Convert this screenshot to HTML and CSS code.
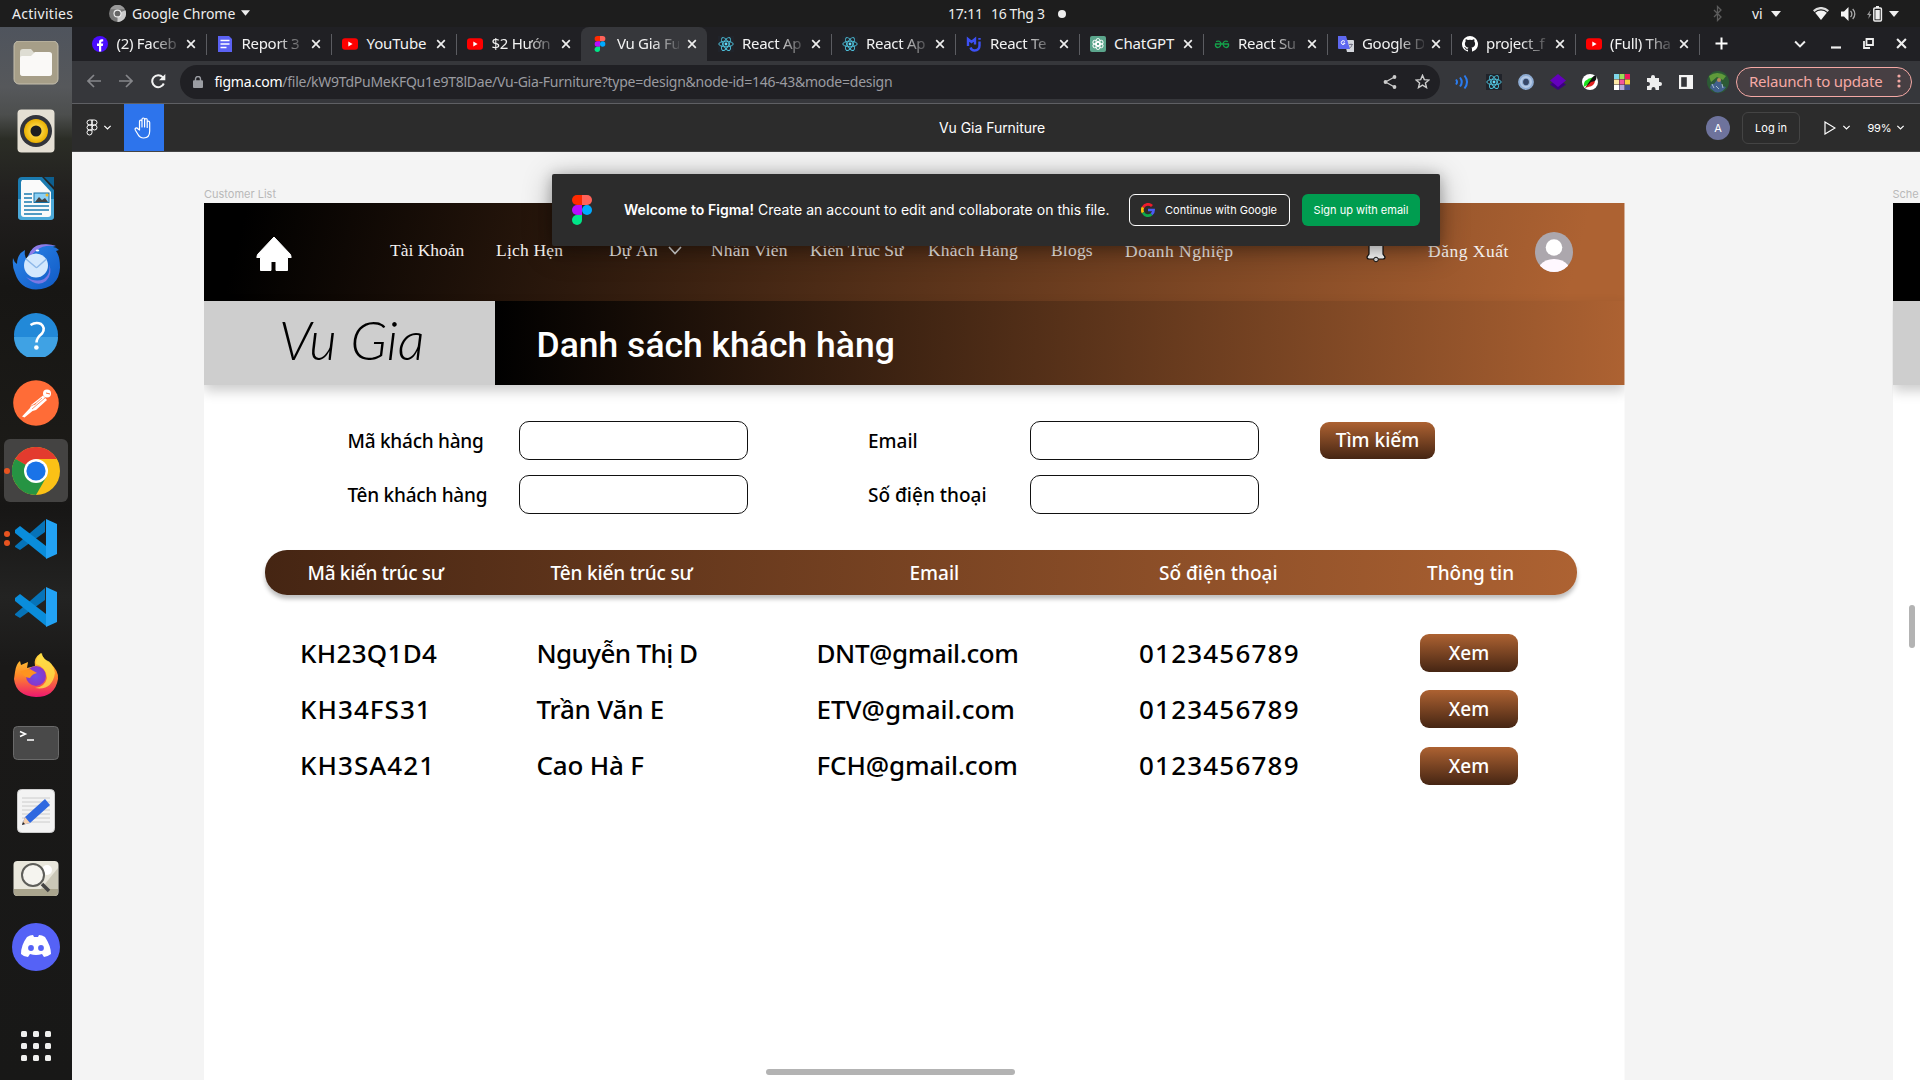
FILE: index.html
```html
<!DOCTYPE html>
<html lang="vi">
<head>
<meta charset="utf-8">
<title>Vu Gia Furniture</title>
<link rel="stylesheet" href="styles.css">
</head>
<body>
<svg class="defs" width="0" height="0">
  <defs>
    <symbol id="i-close" viewBox="0 0 10 10"><path d="M1.2 1.2l7.6 7.6M8.8 1.2L1.2 8.8" stroke="#eee" stroke-width="1.7"/></symbol>
    <symbol id="i-chev" viewBox="0 0 10 10"><path d="M1.5 3.2L5 6.7l3.5-3.5" fill="none" stroke="currentColor" stroke-width="1.3"/></symbol>
    <symbol id="i-tri" viewBox="0 0 10 6"><path d="M0 0h10L5 6z" fill="#eee"/></symbol>
    <symbol id="i-figma" viewBox="0 0 20 30">
      <path d="M5 0h5v10H5A5 5 0 0 1 5 0z" fill="#ff2a00"/><path d="M10 0h5a5 5 0 0 1 0 10h-5z" fill="#ff6259"/>
      <path d="M5 10h5v10H5a5 5 0 0 1 0-10z" fill="#b80cff"/><circle cx="15" cy="15" r="5" fill="#00aaff"/>
      <path d="M5 20h5v5a5 5 0 1 1-5-5z" fill="#00e588"/>
    </symbol>
    <symbol id="i-yt" viewBox="0 0 16 16"><rect y="2.2" width="16" height="11.6" rx="3" fill="#f00"/><path d="M6.3 5.5v5l4.3-2.5z" fill="#fff"/></symbol>
    <symbol id="i-react" viewBox="0 0 16 16"><rect width="16" height="16" fill="#20232a"/><g fill="none" stroke="#4fc6e0" stroke-width=".9"><ellipse cx="8" cy="8" rx="7.2" ry="2.8"/><ellipse cx="8" cy="8" rx="7.2" ry="2.8" transform="rotate(60 8 8)"/><ellipse cx="8" cy="8" rx="7.2" ry="2.8" transform="rotate(120 8 8)"/></g><circle cx="8" cy="8" r="1.4" fill="#61dafb"/></symbol>
    <symbol id="i-vscode" viewBox="0 0 44 40">
      <path d="M1 27L31 1v12L6 31l-5-3z" fill="#0673b8"/>
      <path d="M1 11l5-4 26 20v12L1 14z" fill="#0a8ddb"/>
      <path d="M32 0l11 5v30l-11 5z" fill="#22a2f4"/>
    </symbol>
    <linearGradient id="g-ff" x1="0" y1="0" x2="0" y2="1"><stop offset="0" stop-color="#ffd83a"/><stop offset=".5" stop-color="#ff8a28"/><stop offset="1" stop-color="#ee1670"/></linearGradient>
    <radialGradient id="g-ffc"><stop offset="0" stop-color="#6b50e8"/><stop offset="1" stop-color="#8a35c8"/></radialGradient>
    <linearGradient id="g-tb" x1="0" y1="0" x2="1" y2="1"><stop offset="0" stop-color="#2c86ea"/><stop offset="1" stop-color="#1059c4"/></linearGradient>
    <radialGradient id="g-spk"><stop offset=".3" stop-color="#ffdc50"/><stop offset="1" stop-color="#eab000"/></radialGradient>
  </defs>
</svg>

<div class="topbar">
  <span class="t-act">Activities</span>
  <span class="t-app"><svg width="17" height="17" viewBox="0 0 16 16"><circle cx="8" cy="8" r="8" fill="#777"/><path d="M8 8l7.5-3A8 8 0 0 1 8 16z" fill="#ccc"/><path d="M1 4a8 8 0 0 1 14 0z" fill="#999"/><circle cx="8" cy="8" r="3.8" fill="#eee"/><circle cx="8" cy="8" r="2.7" fill="#666"/></svg><b>Google Chrome</b><svg width="9" height="6"><use href="#i-tri"/></svg></span>
  <span class="t-time">17:11</span><span class="t-date">16 Thg 3</span><i class="dot"></i>
  <span class="t-right">
    <svg width="10" height="17" viewBox="0 0 10 17"><path d="M1 5l7 7-3.5 3.5v-14L8 5l-7 7" fill="none" stroke="#5c5c5c" stroke-width="1.3"/></svg>
    <span>vi</span>
    <svg width="10" height="6"><use href="#i-tri"/></svg>
    <svg width="16" height="13" viewBox="0 0 16 13"><path d="M0 3.2a11.5 11.5 0 0 1 16 0L14.6 5a9.6 9.6 0 0 0-13.2 0z" fill="#ddd"/><path d="M2.2 5.7a8.6 8.6 0 0 1 11.6 0L8 13z" fill="#f4f4f4"/></svg>
    <svg width="16" height="14" viewBox="0 0 16 14"><path d="M0 4.5h3L7.5 0v14L3 9.5H0z" fill="#f4f4f4"/><path d="M9.5 4a4 4 0 0 1 0 6M11.7 2a7 7 0 0 1 0 10" fill="none" stroke="#aaa" stroke-width="1.3"/></svg>
    <svg width="16" height="16" viewBox="0 0 16 16"><path d="M3.5 4L0 9h2l-.7 4L4.5 8h-2z" fill="#999"/><path d="M9 0h3v2H9z" fill="#eee"/><rect x="6.8" y="2" width="7.6" height="13" rx="1" fill="none" stroke="#eee" stroke-width="1.5"/><rect x="8.4" y="4" width="4.4" height="9.4" fill="#eee"/></svg>
    <svg width="10" height="6"><use href="#i-tri"/></svg>
  </span>
</div>

<div class="desk">
  <div class="dock">
    <div class="app"><svg width="46" height="44" viewBox="0 0 46 44"><rect x="1" y="0" width="44" height="43" rx="5" fill="#a69e88" stroke="#c5bfae"/><path d="M7 11q0-3 3-3h8l3 3.500h15q3 0 3 3V32q0 3-3 3H10q-3 0-3-3z" fill="#deddd3"/><path d="M7 17q0-2 2-2h9l4-4h14q3 0 3 3v18q0 3-3 3H10q-3 0-3-3z" fill="#faf9f7"/></svg></div>
    <div class="app"><svg width="38" height="44" viewBox="0 0 38 44"><rect x=".5" y=".5" width="37" height="43" rx="4" fill="#e4dfd3"/><circle cx="19" cy="22" r="16" fill="#32343b"/><circle cx="19" cy="22" r="12" fill="url(#g-spk)"/><circle cx="19" cy="22" r="5.5" fill="#1d1e20"/></svg></div>
    <div class="app"><svg width="38" height="44" viewBox="0 0 38 44"><path d="M5 0h20l12 13v26q0 4-4 4H5q-4 0-4-4V4q0-4 4-4z" fill="#1b7bb0"/><path d="M1 22h36v18q0 3-4 3H5q-4 0-4-3z" fill="#4ba8d8"/><path d="M5 3h18l11 12v22q0 3-3 3H7q-3 0-3-3V5z" fill="#fafafa"/><path d="M27 0h10v10z" fill="#0d5f8f"/><path d="M7 17h8M7 21h8M7 25h8M7 29h25M7 33h25M7 37h18" stroke="#1b7bb0" stroke-width="1.7"/><rect x="17" y="16" width="15" height="9.5" fill="#8bd0f5" stroke="#1670a4"/><path d="M18 25l4-5 3 3 3-2 3 4z" fill="#444"/><circle cx="30" cy="18" r="1.5" fill="#f5b921"/></svg></div>
    <div class="app"><svg width="48" height="46" viewBox="0 0 48 46"><path d="M1 14q-1 9 2 15Q8 45 24 45.500q23-1 24-22Q48 12 44 7l3-1q-3-3-6-3l3-1Q36-.500 28 1q-8 2-11 9-2 3-2 6-3-4-2-10-8 4-8 14-3-2-4-6z" fill="url(#g-tb)"/><path d="M17 12Q19 2 29 .500q9-1 15 1.500-13-1.500-19 4-4 4-8 6z" fill="#8d7ae6"/><path d="M14 33q10 6 18 2 7-5 5-15 4 10-3 17-9 7-20-4z" fill="#7a78e4"/><circle cx="24" cy="21.500" r="12" fill="#d3e8fd"/><path d="M14 15l9.500 8q1 .8 2 0l9-8" fill="none" stroke="#8db8e8" stroke-width="1.500"/><ellipse cx="25.500" cy="6.500" rx="1.800" ry="1" fill="#fff"/></svg></div>
    <div class="app"><svg width="46" height="44" viewBox="0 0 46 44"><circle cx="23" cy="22" r="22" fill="#2289d8"/><path d="M1 24h44a22 22 0 0 1-44 0z" fill="#3fa2e4"/><path d="M17.500 12q5.500-3.500 10.500-1 5 4 1 9.500-5.500 4.500-5.500 9" fill="none" stroke="#fff" stroke-width="2.6"/><circle cx="23.4" cy="34.5" r="2.3" fill="#fff"/></svg></div>
    <div class="app"><svg width="46" height="46" viewBox="0 0 46 46"><circle cx="23" cy="23" r="22.8" fill="#ff6c37"/><path d="M9 36.500l8-8.500 1-3 12-9.500 4 4.500-11 10-3.500 1-8 6.500z" fill="#fff"/><path d="M17 26.500l6-3M19 29l13-11M21 25l8-7" stroke="#ff6c37" stroke-width=".7"/><circle cx="34" cy="13.500" r="4" fill="#fff"/><path d="M33 13l4 1" stroke="#ff6c37"/></svg></div>
    <div class="app current"><i class="run one"></i><svg width="48" height="48" viewBox="0 0 48 48"><circle cx="24" cy="24" r="24" fill="#fbc116"/><path d="M24 24L3.200 12A24 24 0 0 1 44.800 12z" fill="#e33b2e"/><path d="M3.200 12A24 24 0 0 0 24 48l10.400-18z" fill="#269443"/><path d="M24 12h20.800q1.500 3 2.500 6L34 30z" fill="#fbc116"/><path d="M3.200 12L13.600 30 24 24z" fill="#269443"/><circle cx="24" cy="24" r="12" fill="#fff"/><circle cx="24" cy="24" r="9.6" fill="#1a73e8"/></svg></div>
    <div class="app"><i class="run two"></i><svg width="44" height="40"><use href="#i-vscode"/></svg></div>
    <div class="app"><svg width="44" height="40"><use href="#i-vscode"/></svg></div>
    <div class="app"><svg width="46" height="46" viewBox="0 0 46 46"><path d="M2 20Q3 12 7 9l1 4 7-3-1 6 8-2q-2-8 6-13 2 6 9 10 9 8 8 16-3 18-22 18Q3 44 1 27z" fill="url(#g-ff)"/><path d="M29 1q-6 4-6 11 10 3 11 14-2 9-12 10 17 3 20-15Q40 10 33 8q-4-3-4-7z" fill="#ffe148" opacity=".8"/><circle cx="23" cy="24" r="10" fill="url(#g-ffc)"/><path d="M7 19l10-2 7 4q-5 1-7 5-6 0-10-7z" fill="#ff9320"/></svg></div>
    <div class="app"><svg width="46" height="34" viewBox="0 0 46 34"><rect x=".5" y=".5" width="45" height="33" rx="4" fill="#494949" stroke="#6a6a6a"/><path d="M7 5.500l5.500 2.500L7 10.500M14 14h7" fill="none" stroke="#fff" stroke-width="1.5"/></svg></div>
    <div class="app"><svg width="38" height="44" viewBox="0 0 38 44"><rect x=".5" y=".5" width="37" height="43" rx="4" fill="#f3f3f3" stroke="#ccc"/><path d="M5 9h28M5 13h28M5 17h28M5 21h28M5 25h28M5 29h28M5 33h28" stroke="#ccc"/><path d="M5 36l3-8 20-18 5 6-20 18z" fill="#2f68e0"/><path d="M5 36l3-8 5 6z" fill="#f6d0ae"/><path d="M5 36l1-3 2 2z" fill="#222"/></svg></div>
    <div class="app"><svg width="46" height="38" viewBox="0 0 46 38"><rect x=".5" y="1" width="45" height="35" rx="4" fill="#e9e7dc"/><path d="M45 8v22H27z" fill="#cbc8b8"/><path d="M1 29h44v4q0 3-4 3H5q-4 0-4-3z" fill="#aaa58e"/><circle cx="34" cy="10" r="5" fill="#fff"/><circle cx="20" cy="15" r="11" fill="#f5f4ef" stroke="#5e5e5a" stroke-width="2"/><path d="M29 24l7 7" stroke="#444" stroke-width="3.5"/></svg></div>
    <div class="app"><svg width="48" height="48" viewBox="0 0 48 48"><circle cx="24" cy="24" r="24" fill="#5562f6"/><path d="M15 14q3-2 6-2l1 2h4l1-2q3 0 6 2 6 9 6 17-4 3-7 3l-2-3q-6 2-12 0l-2 3q-4 0-7-3 0-9 6-17z" fill="#fff"/><circle cx="19" cy="25" r="2.9" fill="#5562f6"/><circle cx="29" cy="25" r="2.9" fill="#5562f6"/></svg></div>
    <div class="app launcher"><svg width="30" height="30" viewBox="0 0 30 30"><g fill="#f0f0ee"><rect width="6" height="6" rx="1.5"/><rect x="12" width="6" height="6" rx="1.5"/><rect x="24" width="6" height="6" rx="1.5"/><rect y="12" width="6" height="6" rx="1.5"/><rect x="12" y="12" width="6" height="6" rx="1.5"/><rect x="24" y="12" width="6" height="6" rx="1.5"/><rect y="24" width="6" height="6" rx="1.5"/><rect x="12" y="24" width="6" height="6" rx="1.5"/><rect x="24" y="24" width="6" height="6" rx="1.5"/></g></svg></div>
  </div>

  <div class="browser">
    <div class="tabs">
      <div class="tab wide"><svg class="fav" viewBox="0 0 16 16"><circle cx="8" cy="8" r="8" fill="#4a0cff"/><path d="M7 15.500V10H5V7.600h2V6q0-2.800 2.700-2.800h1.500v2.200h-1q-1 0-1 1v1.200h2L10.800 10H9.200v5.500z" fill="#fff"/></svg><span>(2) Faceb</span><svg class="x"><use href="#i-close"/></svg></div>
      <div class="tab wide"><svg class="fav" viewBox="0 0 16 16"><path d="M1 0h11l3 3v13H1z" fill="#5b62f4"/><path d="M3.500 4.500h9M3.500 8h9M3.500 11.500h6" stroke="#fff" stroke-width="1.5"/></svg><span>Report 3</span><svg class="x"><use href="#i-close"/></svg></div>
      <div class="tab wide"><svg class="fav"><use href="#i-yt"/></svg><span class="full">YouTube</span><svg class="x"><use href="#i-close"/></svg></div>
      <div class="tab wide nosep"><svg class="fav"><use href="#i-yt"/></svg><span>$2 Hướn</span><svg class="x"><use href="#i-close"/></svg></div>
      <div class="tab active"><svg class="fav"><use href="#i-figma"/></svg><span>Vu Gia Fu</span><svg class="x"><use href="#i-close"/></svg></div>
      <div class="tab"><svg class="fav"><use href="#i-react"/></svg><span>React Ap</span><svg class="x"><use href="#i-close"/></svg></div>
      <div class="tab"><svg class="fav"><use href="#i-react"/></svg><span>React Ap</span><svg class="x"><use href="#i-close"/></svg></div>
      <div class="tab"><svg class="fav" viewBox="0 0 16 16"><path d="M2 10V3l3.500 3L9 3v5.500M13.500 2v1.700M13.500 5.500v4q0 5-5 5-3 0-4-3" fill="none" stroke="#3c50f5" stroke-width="2.4"/></svg><span>React Te</span><svg class="x"><use href="#i-close"/></svg></div>
      <div class="tab"><svg class="fav" viewBox="0 0 16 16"><rect width="16" height="16" rx="2" fill="#5ba58c"/><g fill="none" stroke="#fff" stroke-width=".9"><rect x="6" y="2.5" width="4" height="7.5" rx="2"/><rect x="6" y="2.5" width="4" height="7.5" rx="2" transform="rotate(60 8 8)"/><rect x="6" y="2.5" width="4" height="7.5" rx="2" transform="rotate(120 8 8)"/><rect x="6" y="2.5" width="4" height="7.5" rx="2" transform="rotate(180 8 8)"/><rect x="6" y="2.5" width="4" height="7.5" rx="2" transform="rotate(240 8 8)"/><rect x="6" y="2.5" width="4" height="7.5" rx="2" transform="rotate(300 8 8)"/></g></svg><span class="full">ChatGPT</span><svg class="x"><use href="#i-close"/></svg></div>
      <div class="tab"><svg class="fav" viewBox="0 0 16 16"><path d="M1 8h14M2 5.500q4-1.500 5 2-.5 4-3.500 4-2.500-.5-2-3.500M14 5.500q-4-1.500-5 2 .5 4 3.500 4 2.500-.5 2-3.500" fill="none" stroke="#15a04a" stroke-width="1.3"/></svg><span>React Su</span><svg class="x"><use href="#i-close"/></svg></div>
      <div class="tab"><svg class="fav" viewBox="0 0 16 16"><path d="M6 4h9q1 0 1 1v11H9z" fill="#d4d6dc"/><path d="M0 0h8l4 13H1q-1 0-1-1z" fill="#5e68f0"/><path d="M7 5.500Q5.500 4 4 5q-1.500 1.500 0 3.200 2 1.200 3-1H5" fill="none" stroke="#fff"/><path d="M11 8.500h4M13 7.500v1M11.500 12q2.500-1 2.500-3.500" fill="none" stroke="#667" stroke-width=".8"/></svg><span>Google D</span><svg class="x"><use href="#i-close"/></svg></div>
      <div class="tab"><svg class="fav" viewBox="0 0 16 16"><path d="M8 0a8 8 0 0 0-2.500 15.600c.4 0 .5-.2.500-.4v-1.500c-2.200.5-2.700-1-2.700-1-.4-.9-.9-1.100-.9-1.100-.7-.5.100-.5.100-.5.800 0 1.200.8 1.200.8.700 1.300 1.900.9 2.300.7.100-.5.300-.9.500-1.100-1.800-.2-3.600-.9-3.600-4 0-.9.300-1.600.8-2.100 0-.2-.400-1 .100-2.100 0 0 .7-.2 2.200.8a7.500 7.500 0 0 1 4 0c1.500-1 2.200-.8 2.200-.8.400 1.100.2 1.900.1 2.100.5.500.8 1.200.8 2.100 0 3.100-1.900 3.800-3.700 4 .3.200.6.700.6 1.500v2.200c0 .2.100.5.500.4A8 8 0 0 0 8 0z" fill="#fff"/></svg><span>project_f</span><svg class="x"><use href="#i-close"/></svg></div>
      <div class="tab"><svg class="fav"><use href="#i-yt"/></svg><span>(Full) Tha</span><svg class="x"><use href="#i-close"/></svg></div>
      <div class="winbtns">
        <svg width="13" height="13" viewBox="0 0 13 13"><path d="M6.500 .5v12M.5 6.500h12" stroke="#fff" stroke-width="2"/></svg>
        <svg width="14" height="14" viewBox="0 0 10 10"><path d="M1.500 3.200L5 6.700l3.500-3.500" fill="none" stroke="#eee" stroke-width="1.4"/></svg>
        <svg width="10" height="12" viewBox="0 0 10 12"><path d="M0 9.500h10" stroke="#eee" stroke-width="2.2"/></svg>
        <svg width="11" height="11" viewBox="0 0 11 11"><path d="M3.500 1h6.500v6H3.500zM1 3v7h6" fill="none" stroke="#eee" stroke-width="1.8"/></svg>
        <svg width="11" height="11" viewBox="0 0 10 10"><path d="M1 1l8 8M9 1L1 9" stroke="#eee" stroke-width="1.9"/></svg>
      </div>
    </div>

    <div class="toolbar">
      <div class="navbtns">
        <svg width="14" height="14" viewBox="0 0 14 14"><path d="M14 7H1.500M7 1L1 7l6 6" fill="none" stroke="#85868a" stroke-width="1.7"/></svg>
        <svg width="14" height="14" viewBox="0 0 14 14"><path d="M0 7h12.500M7 1l6 6-6 6" fill="none" stroke="#85868a" stroke-width="1.7"/></svg>
        <svg width="15" height="15" viewBox="0 0 15 15"><path d="M12.800 9.500A6 6 0 1 1 11.700 3.200l1.500 1.500" fill="none" stroke="#f2f2f2" stroke-width="2"/><path d="M14.300 0v6.300H8z" fill="#f2f2f2"/></svg>
      </div>
      <div class="omni">
        <svg width="10" height="12" viewBox="0 0 10 12"><rect y="4.3" width="10" height="7.7" rx="1" fill="#9b9da3"/><path d="M2.500 5V3a2.500 2.500 0 0 1 5 0v2" fill="none" stroke="#9b9da3" stroke-width="1.4"/></svg>
        <span class="url"><b>figma.com</b>/file/kW9TdPuMeKFQu1e9T8lDae/Vu-Gia-Furniture?type=design&amp;node-id=146-43&amp;mode=design</span>
        <svg width="14" height="14" viewBox="0 0 14 14"><path d="M11.500 2L2.500 7l9 5" fill="none" stroke="#ccc" stroke-width="1.3"/><g fill="#ccc"><circle cx="11.5" cy="2" r="1.9"/><circle cx="2.5" cy="7" r="1.9"/><circle cx="11.5" cy="12" r="1.9"/></g></svg>
        <svg width="15" height="15" viewBox="0 0 15 15"><path d="M7.500 1.300l1.800 4.300 4.700.4-3.600 3 1.100 4.600-4-2.500-4 2.500 1.100-4.600L1 6l4.700-.4z" fill="none" stroke="#ccc" stroke-width="1.4"/></svg>
      </div>
      <div class="exts">
        <svg viewBox="0 0 16 16"><path d="M2 5.500q2 2.500 0 5M6 3.500q3.500 4.500 0 9M10.500 1.500q5 6.500 0 13" fill="none" stroke="#2b7cf0" stroke-width="2"/></svg>
        <svg><use href="#i-react"/></svg>
        <svg viewBox="0 0 16 16"><circle cx="8" cy="8" r="5.3" fill="none" stroke="#8fadd4" stroke-width="5.2"/><circle cx="8" cy="8" r="5" fill="none" stroke="#b6cae6" stroke-width="2"/><ellipse cx="8" cy="8" rx="2.5" ry="3.2" fill="#35476a"/></svg>
        <svg viewBox="0 0 16 16"><path d="M0 10.500L8 5l8 5.500L8 16z" fill="#3b007f"/><path d="M0 6.500L8 0l8 6.500L8 13z" fill="#6400bd"/></svg>
        <svg viewBox="0 0 16 16"><circle cx="8" cy="8" r="8" fill="#fff"/><path d="M1.500 13Q1 5 12 3l-3 6z" fill="#1be01b"/><path d="M3 14l7-9 3 1q0 6-7 7z" fill="#e02020"/><path d="M3 14L10 4q2-3 4-2 1 3-1 5l-4 1z" fill="#111"/></svg>
        <svg viewBox="0 0 16 16"><path d="M0 0h5v5H0z" fill="#7fd6ea"/><path d="M5.500 0h5v5h-5z" fill="#9ae05a"/><path d="M11 0h5v5h-5z" fill="#f0185c"/><path d="M0 5.500h5v5H0z" fill="#ffe9a8"/><path d="M5.500 5.500h5v5h-5z" fill="#f5559a"/><path d="M11 5.500h5v5h-5z" fill="#f7cf3c"/><path d="M0 11h5v5H0z" fill="#fff"/><path d="M5.500 11h5v5h-5z" fill="#b6a8dc"/><path d="M11 11h5v5h-5z" fill="#44508c"/></svg>
        <svg viewBox="0 0 16 16"><path d="M1 4h4V3a2 2 0 0 1 4 0v1h4v4h1a2 2 0 0 1 0 4h-1v4H9.500v-1a2 2 0 0 0-4 0v1H1v-4h1a2 2 0 0 0 0-4H1z" fill="#eee"/></svg>
        <svg viewBox="0 0 16 16"><path d="M1 1h14v14H1z" fill="#f4f4f4"/><path d="M3.200 3.200h5.600v9.600H3.200z" fill="#35363a"/></svg>
        <svg class="me" viewBox="0 0 22 22"><circle cx="11" cy="11" r="11" fill="#2c5a35"/><path d="M2 5q8-6 17 0l-3 4-6-3-6 5z" fill="#5f9a3a"/><path d="M3 17q1-5 4-4l3-4 4 1 1 5 4 1q-4 7-11 5z" fill="#41608c"/><circle cx="12" cy="9" r="2" fill="#b9875f"/><path d="M5 13l2 4M15 13l1 4M9 15l3 3" stroke="#a8c0cc"/></svg>
      </div>
      <div class="relaunch"><span>Relaunch to update</span><svg width="4" height="14" viewBox="0 0 4 14"><g fill="#f5a9a5"><circle cx="2" cy="2" r="1.6"/><circle cx="2" cy="7" r="1.6"/><circle cx="2" cy="12" r="1.6"/></g></svg></div>
    </div>

    <div class="figbar">
      <div class="menu"><svg width="12" height="17" viewBox="0 0 12 17"><path d="M6 1H3.500a2.500 2.500 0 0 0 0 5H6zM6 1h2.500a2.500 2.500 0 0 1 0 5H6zM6 6H3.500a2.500 2.500 0 0 0 0 5H6zM6 11H3.500A2.500 2.500 0 1 0 6 13.500z" fill="none" stroke="#fff" stroke-width="1"/><circle cx="8.5" cy="8.5" r="2.5" fill="none" stroke="#fff"/></svg><svg width="9" height="9"><use href="#i-chev"/></svg></div>
      <div class="hand"><svg width="20" height="22" viewBox="0 0 20 22"><path d="M5.500 13V4.500q0-1.400 1.200-1.400t1.300 1.400V10 2.500q0-1.500 1.300-1.500t1.300 1.500V10 3q0-1.400 1.300-1.400T13.200 3v7.500V5.500q0-1.300 1.200-1.300t1.300 1.300V14q0 7-6 7-4 0-6-4l-2.300-3.800q-.8-1.500.4-2.100t2 .6z" fill="none" stroke="#fff" stroke-width="1.2" stroke-linejoin="round"/></svg></div>
      <div class="filename">Vu Gia Furniture</div>
      <div class="who">A</div>
      <div class="login">Log in</div>
      <div class="play"><svg width="12" height="14" viewBox="0 0 12 14"><path d="M1 1l10 6-10 6z" fill="none" stroke="#fff" stroke-width="1.2"/></svg><svg width="9" height="9"><use href="#i-chev"/></svg></div>
      <div class="zoom"><span>99%</span><svg width="9" height="9"><use href="#i-chev"/></svg></div>
    </div>

    <div class="canvas">
      <div class="artboard">
        <div class="label">Customer List</div>
        <div class="frame">
          <div class="site">
            <svg class="home" width="36" height="36" viewBox="0 0 36 36"><path d="M18 1L1.500 18.500 0.800 21.500H4.500V34.500H15V25.500h5v9h11.500V21.500h3.700l-.7-3z" fill="#fff" stroke="#fff" stroke-linejoin="round"/></svg>
            <span class="first">Tài Khoản</span><span>Lịch Hẹn</span><span>Dự Án</span>
            <svg class="drop" width="14" height="9" viewBox="0 0 14 9"><path d="M1 1l6 6.500L13 1" fill="none" stroke="#ddd" stroke-width="1.7"/></svg>
            <span>Nhân Viên</span><span class="tight">Kiến Trúc Sư</span><span>Khách Hàng</span><span>Blogs</span><span class="low">Doanh Nghiệp</span>
            <svg class="bell" width="20" height="26" viewBox="0 0 20 26"><path d="M3 17V9q0-7 7-7t7 7v8l2 3q0 2-2 2H3q-2 0-2-2z" fill="#fff" stroke="#111" stroke-width="1.2"/><circle cx="10" cy="22.5" r="2.3" fill="#ddd" stroke="#111"/></svg>
            <span class="low">Đăng Xuất</span>
            <svg class="avatar" width="38" height="40" viewBox="0 0 38 40"><defs><clipPath id="av"><ellipse cx="19" cy="20" rx="19" ry="20"/></clipPath></defs><g clip-path="url(#av)"><path d="M0 0h38v40H0z" fill="#aca7ad"/><circle cx="19" cy="15.5" r="8.3" fill="#fff"/><path d="M5 33q5-6 14-6t14 6v7H5z" fill="#fff8ff"/></g></svg>
          </div>
          <div class="titlebar">
            <div class="brand">Vu Gia</div>
            <h1>Danh sách khách hàng</h1>
          </div>
          <div class="form">
            <label>Mã khách hàng</label><i class="input"></i><label class="r">Email</label><i class="input"></i><div class="btn find">Tìm kiếm</div>
            <label>Tên khách hàng</label><i class="input"></i><label class="r">Số điện thoại</label><i class="input"></i>
          </div>
          <div class="thead"><span class="c1">Mã kiến trúc sư</span><span class="c2">Tên kiến trúc sư</span><span>Email</span><span>Số điện thoại</span><span>Thông tin</span></div>
          <div class="rows">
            <span class="id-q">KH23Q1D4</span><span class="name-l">Nguyễn Thị D</span><span class="mail-w">DNT@gmail.com</span><span class="num">0123456789</span><div class="btn">Xem</div>
            <span class="id">KH34FS31</span><span class="name">Trần Văn E</span><span>ETV@gmail.com</span><span class="num">0123456789</span><div class="btn">Xem</div>
            <span class="id">KH3SA421</span><span class="name">Cao Hà F</span><span class="mail">FCH@gmail.com</span><span class="num">0123456789</span><div class="btn">Xem</div>
          </div>
        </div>
      </div>
      <div class="artboard next">
        <div class="label">Sche</div>
        <div class="frame"><div class="n-top"></div><div class="n-brand"></div></div>
      </div>

      <div class="banner">
        <svg width="20" height="30"><use href="#i-figma"/></svg>
        <p><b>Welcome to Figma!</b> Create an account to edit and collaborate on this file.</p>
        <div class="google"><svg width="14" height="14" viewBox="0 0 14 14"><g fill="none" stroke-width="2.7"><path d="M2 4.300A5.600 5.600 0 0 1 11 3" stroke="#f01c2c"/><path d="M2 4.300a5.600 5.600 0 0 0 0 5.400" stroke="#fbbc05"/><path d="M2 9.700A5.600 5.600 0 0 0 10.600 11.300" stroke="#10a84c"/><path d="M10.600 11.300A5.500 5.500 0 0 0 12.600 7H7" stroke="#4a5cf5"/></g></svg><span>Continue with Google</span></div>
        <div class="signup">Sign up with email</div>
      </div>
      <i class="sb-h"></i><i class="sb-v"></i>
    </div>
  </div>
</div>
</body>
</html>
```
FILE: styles.css
```css
* { box-sizing: border-box; }
html, body { margin: 0; height: 100%; overflow: hidden; }
body {
  display: flex; flex-direction: column;
  width: 1920px; height: 1080px;
  font-family: "Noto Sans", "Open Sans", sans-serif;
  font-size: 14px; color: #fff; background: #1d1d1d;
  white-space: nowrap;
}
svg { flex: none; display: block; }
.defs { position: absolute; }

/* system bar */
.topbar { height: 27px; flex: none; background: #1d1d1d; display: grid; grid-template-columns: 97px 839px 43px 67px 665px 1fr; padding-left: 12px; align-items: center; color: #eee; font-size: 14px; letter-spacing: -.2px; }
.t-act { letter-spacing: .3px; }
.t-app { display: flex; align-items: center; gap: 6px; padding-bottom: 1px; }
.t-app b { font-weight: 400; width: 103px; letter-spacing: 0; }
.t-time, .t-date { padding-bottom: 1px; }
.t-date { letter-spacing: -.35px; }
.dot { width: 8px; height: 8px; border-radius: 50%; background: #eee; }
.t-right { display: grid; grid-template-columns: 39px 19px 42px 28px 26px 22px 10px; align-items: center; margin-left: -10px; }

.desk { flex: 1; display: flex; min-height: 0; }

/* dock */
.dock { width: 72px; flex: none; display: flex; flex-direction: column; align-items: center; padding-top: 2px; background: linear-gradient(#4f545d 0, #56585b 60px, #4c4e4d 88px, #2b2d26 112px, #211f1e 170px, #171614 260px, #1c1b18 440px, #171615 480px, #232322 570px, #1a1918 640px, #181817 100%); }
.app { width: 64px; height: 68px; display: flex; align-items: center; justify-content: center; position: relative; flex: none; }
.app.current { background: #444342; height: 63px; margin: 2px 0 3px; border-radius: 6px; }
.launcher { margin-top: 31px; }
.run { position: absolute; left: 0; width: 6px; height: 6px; border-radius: 50%; background: #e95420; }
.run.two { top: 26px; box-shadow: 0 9px #e95420; }

/* browser chrome */
.browser { flex: 1; min-width: 0; display: flex; flex-direction: column; }
.tabs { height: 34px; flex: none; background: #202024; display: flex; padding-left: 8.5px; }
.tab { width: 124px; flex: none; display: grid; grid-template-columns: 16px 60px 10px; column-gap: 8px; align-items: center; padding: 0 0 1px 11.5px; position: relative; font-size: 15px; letter-spacing: -.3px; color: #f2f2f2; }
.tab.wide { width: 125px; column-gap: 8.5px; }
.tab::after { content: ""; position: absolute; right: -1px; top: 7px; width: 1px; height: 21px; background: #5b5c61; }
.tab.nosep::after, .tab.active::after { display: none; }
.tab.active { width: 126px; column-gap: 9px; background: #36373b; border-radius: 8px 8px 0 0; }
.tab span { margin-top: -1px; margin-right: -2px; -webkit-mask-image: linear-gradient(90deg, #000 35px, rgba(0,0,0,.12) 62px); mask-image: linear-gradient(90deg, #000 35px, rgba(0,0,0,.12) 62px); }
.tab span.full { -webkit-mask-image: none; mask-image: none; letter-spacing: -.1px; }
.tab .fav { width: 16px; height: 16px; }
.tab .x { width: 10px; height: 10px; margin-left: 1px; }
.winbtns { display: grid; grid-template-columns: 78px 38px 32px 33px 12px; align-items: center; padding: 0 0 1px 16.5px; }

.toolbar { height: 43px; flex: none; background: #36373b; border-bottom: 1px solid #5f6064; display: flex; align-items: center; padding: 0 0 1px 15px; }
.navbtns { display: flex; gap: 18px; width: 93px; }
.omni { width: 1260px; height: 34px; border-radius: 17px; background: #202024; display: grid; grid-template-columns: 21.5px 1168.5px 32px 15px; align-items: center; padding-left: 13px; }
.url { color: #9a9ba0; font-size: 14px; letter-spacing: -.25px; }
.url b { font-weight: 400; color: #fff; }
.exts { display: flex; gap: 16px; align-items: center; margin-left: 14px; }
.exts svg { width: 16px; height: 16px; }
.exts .me { width: 22px; height: 22px; margin-left: -3px; }
.relaunch { margin-left: 7px; width: 176px; height: 30px; border: 1px solid #f5a9a5; border-radius: 15px; background: #473f43; color: #f5a9a5; display: flex; align-items: center; padding: 0 0 1px 12px; font-size: 15px; letter-spacing: -.22px; }
.relaunch span { width: 148px; }

/* editor bar */
.figbar { height: 48px; flex: none; background: #2c2c2c; border-bottom: 1px solid #444; display: grid; grid-template-columns: 52px 775px 779px 36px 84px 42px 1fr; align-items: center; font-family: Inter, sans-serif; font-size: 11px; grid-template-rows: 47px; }
.menu { display: flex; gap: 5px; align-items: center; padding-left: 14px; }
.hand { background: #2d74ec; width: 40px; height: 47px; display: flex; align-items: center; justify-content: center; }
.filename { margin-left: 40px; font-size: 14px; letter-spacing: -.05px; }
.who { width: 24px; height: 24px; border-radius: 50%; background: #6e739c; display: grid; place-items: center; margin-left: 28px; }
.login { width: 58px; height: 32px; border: 1px solid #444; border-radius: 6px; display: grid; place-items: center; margin-left: 28px; }
.play { display: flex; gap: 6px; align-items: center; margin-left: 26px; }
.zoom { display: flex; gap: 5px; align-items: center; margin-left: 27.5px; letter-spacing: -.2px; }

/* canvas */
.canvas { flex: 1; position: relative; overflow: hidden; background: #f4f4f4; display: flex; padding: 34px 0 0 132px; }
.artboard { width: 1420.5px; flex: none; display: flex; flex-direction: column; }
.artboard.next { margin-left: 268px; }
.label { font: 11px/17px Inter, sans-serif; height: 16.5px; color: #b9b9b9; }
.frame { flex: 1; background: #fff; clip-path: inset(0); }
.site { height: 98.5px; background: linear-gradient(104deg, #000 3%, #ad6232 96%); display: grid; grid-template-columns: 134px 106px 113px 60px 42px 99px 118px 123px 74px 241px 62px 107px 38px; padding-left: 52px; align-items: center; font-family: "Liberation Serif", serif; font-size: 17.5px; letter-spacing: .2px; color: #f4f0ee; }
.site svg, .site span { position: relative; }
.site span { top: -1.5px; }
.site .first { letter-spacing: 0; }
.site .tight { letter-spacing: -.05px; }
.site .low { top: -.5px; letter-spacing: .5px; }
.home { top: 2.5px; }
.drop { top: -1px; left: -1px; }
.bell { top: -1.5px; }
.n-top { height: 98.5px; background: #000; }
.n-brand { height: 84px; background: #cecece; box-shadow: 0 6px 12px rgba(0,0,0,.2); }

.titlebar { height: 84px; display: flex; box-shadow: 0 6px 12px rgba(0,0,0,.2); position: relative; }
.brand { width: 291px; background: #cecece; color: #000; font: italic 300 54px/78px Lato, sans-serif; padding-left: 75px; letter-spacing: -.2px; }
.titlebar h1 { flex: 1; margin: 0; padding-left: 41.5px; background: linear-gradient(92deg, #000, #ad6232); font: 500 35.5px/88px Roboto, sans-serif; color: #fff; }

.form { display: grid; grid-template-columns: 171px 349.5px 161.5px 290.5px 115px; grid-template-rows: 39px 39px; row-gap: 15px; padding: 36px 0 0 143.5px; align-items: center; color: #000; font-size: 19px; font-weight: 500; letter-spacing: -.25px; }
.form .r { letter-spacing: 0; }
.input { width: 229px; height: 39px; border: 1px solid #111; border-radius: 10px; background: #fff; }
.btn { width: 98px; height: 38px; border-radius: 9px; background: linear-gradient(#ad6232, #452513); color: #fff; display: grid; place-items: center; font-size: 19px; letter-spacing: 0; }
.btn.find { width: 115px; height: 37px; padding-bottom: 2px; }
.thead { width: 1312px; height: 45px; margin: 36px 0 0 61px; border-radius: 22px; background: linear-gradient(92deg, #452513, #ad6232); box-shadow: 0 4px 4px rgba(0,0,0,.25); display: grid; grid-template-columns: 243px 359px 249.5px 268px 1fr; padding-left: 42.5px; align-items: center; font-size: 19px; font-weight: 500; }
.thead .c1 { letter-spacing: -.3px; }
.thead .c2 { letter-spacing: -.15px; }
.rows { display: grid; grid-template-columns: 236.5px 280px 322.5px 281px 98px; grid-template-rows: repeat(3, 56.3px); align-items: center; margin: 30px 0 0 96px; color: #000; font-size: 26px; font-weight: 500; }
.rows > span { margin-top: -1px; }
.num { letter-spacing: 1.2px; }
.id { letter-spacing: 1.05px; }
.id-q { letter-spacing: .3px; }
.name { letter-spacing: -.2px; }
.name-l { letter-spacing: -.6px; }
.mail-w { letter-spacing: -.4px; }
.mail { letter-spacing: -.15px; }

/* sign-up prompt over the canvas */
.banner { position: absolute; left: 480px; top: 22px; width: 888px; height: 72px; background: #2c2c2c; border-radius: 2px; box-shadow: 0 5px 30px rgba(0,0,0,.3), 0 2px 14px rgba(0,0,0,.25); display: grid; grid-template-columns: 52px 505px 173px 118px; align-items: center; padding-left: 20px; font: 14px Inter, sans-serif; }
.banner p { margin: -1px 0 0; letter-spacing: .04px; }
.banner p b { font-weight: 600; }
.google { width: 161px; height: 32px; border: 1px solid #fff; border-radius: 6px; display: flex; align-items: center; gap: 10px; padding-left: 11px; font-size: 11px; }
.signup { height: 32px; background: #009d50; border-radius: 6px; display: grid; place-items: center; font-size: 11px; }
.sb-h { position: absolute; left: 694px; top: 917px; width: 249px; height: 6px; border-radius: 3px; background: #b3b3b3; }
.sb-v { position: absolute; left: 1837px; top: 453px; width: 6px; height: 43px; border-radius: 3px; background: #b3b3b3; }
```
